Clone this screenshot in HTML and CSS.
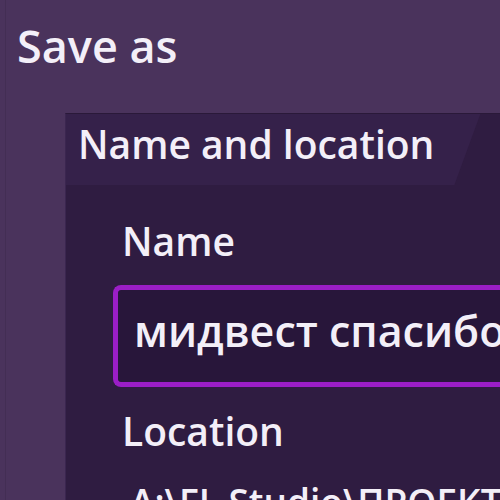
FILE: index.html
```html
<!DOCTYPE html>
<html lang="en">
<head>
<meta charset="utf-8">
<title>Save as</title>
<link rel="stylesheet" href="styles.css">
</head>
<body>
<div class="window">
  <h1 class="title">Save as</h1>
  <section class="panel">
    <div class="tabs">
      <div class="tab">Name and location</div>
    </div>
    <div class="content">
      <div class="label">Name</div>
      <div class="input">мидвест спасибо</div>
      <div class="label">Location</div>
      <div class="path">A:\FL Studio\ПРОЕКТЫ\</div>
    </div>
  </section>
</div>
</body>
</html>
```

FILE: styles.css
```css
html, body {
  margin: 0;
  padding: 0;
  height: 100%;
  overflow: hidden;
}
body {
  background: #4a335c;
  font-family: "Open Sans", "Noto Sans", sans-serif;
  font-weight: 600;
  color: #f3eff8;
}
.window {
  margin-left: 5px;
  border-left: 1px solid #432e54;
  height: 100%;
}
.title {
  margin: 0;
  padding: 23px 0 0 11px;
  font-size: 45px;
  line-height: 46px;
  font-weight: 600;
  height: 46px;
}
.panel {
  margin: 44px 0 0 59px;
  background: #2f1c41;
  border-top: 1px solid #2a1939;
  border-left: 1px solid #3b2650;
  min-height: 400px;
}
.tabs {
  display: flex;
  height: 71px;
}
.tab {
  background: #35214a;
  font-size: 39px;
  line-height: 40px;
  padding: 10px 46px 21px 12px;
  clip-path: polygon(0 0, 100% 0, calc(100% - 26px) 100%, 0 100%);
  white-space: nowrap;
}
.content {
  padding: 36px 0 0 47px;
}
.label {
  font-size: 39px;
  line-height: 40px;
  margin-left: 9px;
}
.input {
  margin-top: 24px;
  margin-bottom: 24px;
  border: 5px solid #9b1ec6;
  border-right: none;
  border-radius: 8px 0 0 8px;
  background: #28163a;
  font-size: 43px;
  line-height: 44px;
  padding: 19px 0 29px 16px;
  white-space: nowrap;
  overflow: hidden;
}
.path {
  margin-top: 32px;
  margin-left: 17px;
  font-size: 37px;
  line-height: 38px;
  white-space: nowrap;
}
```
